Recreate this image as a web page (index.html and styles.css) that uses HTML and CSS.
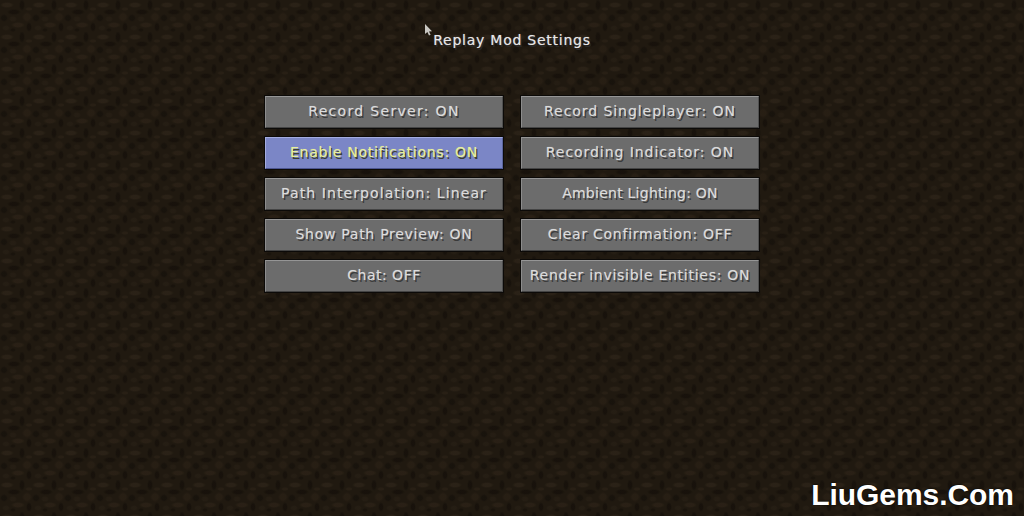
FILE: index.html
```html
<!DOCTYPE html>
<html lang="en">
<head>
<meta charset="utf-8">
<title>Replay Mod Settings</title>
<link rel="stylesheet" href="styles.css">
</head>
<body>
<main class="screen">
  <h1 class="title">Replay Mod Settings</h1>
  <svg class="cursor" viewBox="0 0 8 12" width="8" height="12"><path d="M0 0 L0 10 L2.4 8 L4 11.5 L5.6 10.8 L4 7.4 L7 7.2 Z" fill="#c9c7c2"/></svg>
  <div class="grid">
    <button class="btn track-xl">Record Server: ON</button>
    <button class="btn track-l">Record Singleplayer: ON</button>
    <button class="btn active track-s">Enable Notifications: ON</button>
    <button class="btn track-l">Recording Indicator: ON</button>
    <button class="btn track-xxl">Path Interpolation: Linear</button>
    <button class="btn track-xs">Ambient Lighting: ON</button>
    <button class="btn track-s">Show Path Preview: ON</button>
    <button class="btn track-s">Clear Confirmation: OFF</button>
    <button class="btn">Chat: OFF</button>
    <button class="btn track-s">Render invisible Entities: ON</button>
  </div>
  <div class="watermark">LiuGems.Com</div>
</main>
</body>
</html>
```
FILE: styles.css
```css
* { box-sizing: border-box; }
html, body { margin: 0; height: 100%; overflow: hidden; }
.screen {
  position: relative;
  width: 1024px;
  height: 516px;
  display: flex;
  flex-direction: column;
  align-items: center;
  padding-top: 31px;
  background-color: #201910;
  background-image:
    radial-gradient(ellipse 7px 3px at 7px 5px, rgba(58,46,32,.4) 55%, transparent),
    radial-gradient(ellipse 3px 6px at 22px 5px, rgba(10,7,4,.38) 55%, transparent),
    radial-gradient(ellipse 4px 2px at 29px 9px, rgba(54,43,30,.35) 55%, transparent),
    radial-gradient(ellipse 7px 3px at 14px 12px, rgba(10,7,4,.38) 55%, transparent),
    radial-gradient(ellipse 5px 5px at 27px 17px, rgba(52,41,28,.35) 55%, transparent),
    radial-gradient(ellipse 4px 4px at 4px 18px, rgba(10,7,4,.33) 55%, transparent),
    radial-gradient(ellipse 4px 3px at 13px 19px, rgba(50,40,28,.3) 55%, transparent),
    radial-gradient(ellipse 7px 3px at 18px 25px, rgba(56,44,30,.38) 55%, transparent),
    radial-gradient(ellipse 3px 5px at 29px 27px, rgba(10,7,4,.38) 55%, transparent),
    radial-gradient(ellipse 4px 3px at 6px 28px, rgba(48,38,26,.33) 55%, transparent),
    radial-gradient(ellipse 3px 2px at 13px 30px, rgba(10,7,4,.3) 55%, transparent);
  background-size: 32px 32px;
  font-family: "DejaVu Sans", sans-serif;
}
.title {
  margin: 0 0 46px;
  height: 19px;
  line-height: 19px;
  font-size: 14px;
  font-weight: 400;
  letter-spacing: 0.75px;
  color: #e8e8e8;
  text-shadow: 0 0 1px rgba(232,232,232,.5), 1.5px 1.5px 0 #2a2a2a;
}
.cursor { position: absolute; left: 425px; top: 24px; }
.grid {
  display: grid;
  grid-template-columns: 238px 238px;
  grid-auto-rows: 32px;
  gap: 9px 18px;
}
.btn {
  padding: 0 0 2px;
  border: 1px solid #101010;
  border-top-color: #959595;
  border-left-color: #8c8c8c;
  border-right-color: #505050;
  border-bottom-color: #444444;
  outline: 1px solid #0c0a08;
  background: #6c6c6c;
  font: 14px "DejaVu Sans", sans-serif;
  letter-spacing: 0.5px;
  white-space: nowrap;
  color: #dcdcdc;
  text-shadow: 0 0 1px rgba(220,220,220,.45), 1.5px 1.5px 0 #3a3a3a;
}
.track-xs { letter-spacing: 0.25px; }
.track-s { letter-spacing: 0.73px; }
.track-l { letter-spacing: 0.94px; }
.track-xl { letter-spacing: 1.31px; }
.track-xxl { letter-spacing: 1.09px; }
.active {
  background: #7b86c6;
  border-top-color: #a4ace0;
  border-left-color: #a4ace0;
  border-right-color: #5b659e;
  border-bottom-color: #4c5590;
  color: #e8f09c;
  text-shadow: 0 0 1px rgba(232,240,156,.45), 1.5px 1.5px 0 #3c4030;
}
.watermark {
  position: absolute;
  right: 10px;
  bottom: 4px;
  font: 700 30px "Liberation Sans", Arial, sans-serif;
  letter-spacing: -0.05px;
  color: #ffffff;
  text-shadow: 0 0 2px #000;
}
```
